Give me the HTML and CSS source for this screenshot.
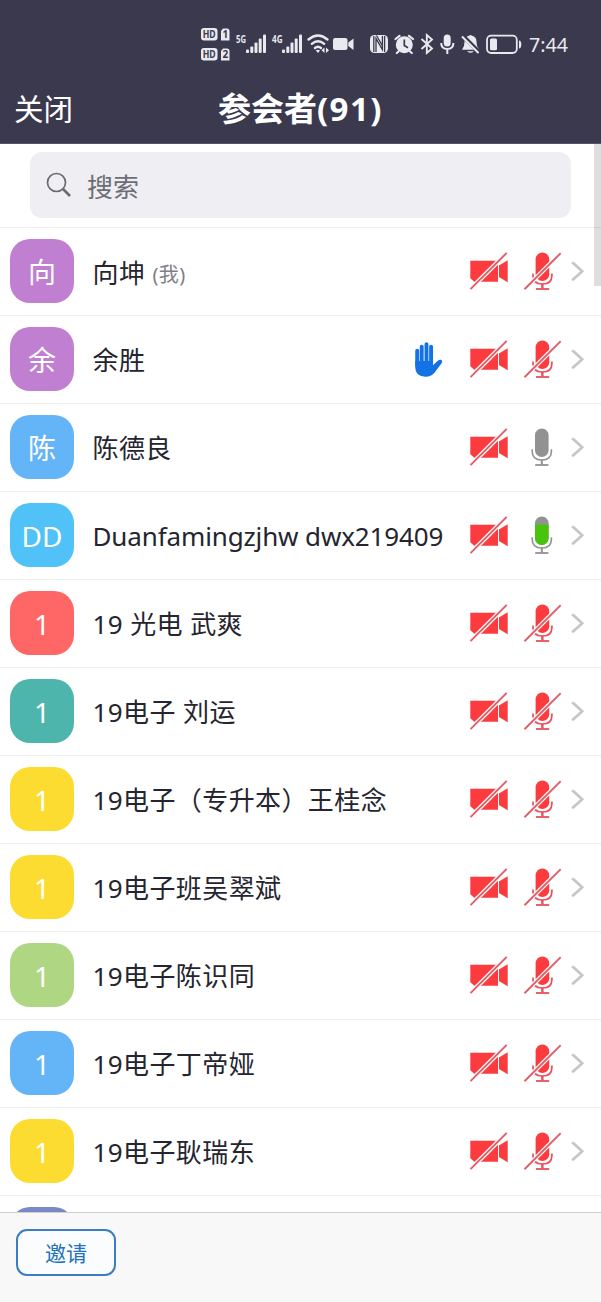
FILE: index.html
```html
<!DOCTYPE html>
<html lang="zh-CN">
<head>
<meta charset="utf-8">
<title>参会者</title>
<link rel="stylesheet" href="styles.css">
</head>
<body>
<svg class="sprite" width="0" height="0">
  <symbol id="cam" viewBox="0 0 40 41">
    <path fill="#fb3b3e" d="M1.3 9.7H29V30.7H5.3L1.3 27.2ZM30 14.6L38.7 9.2V31.2L30 26Z"/>
    <path stroke="#fff" stroke-width="4.4" d="M2 37.6L37.4 2.2"/>
    <path stroke="#e0606b" stroke-width="2" d="M1.5 38.1L37.7 1.9"/>
  </symbol>
  <symbol id="micoff" viewBox="0 0 40 41">
    <rect x="12.6" y="1.6" width="13.6" height="28.4" rx="6.8" fill="#fb3b3e"/>
    <path fill="none" stroke="#e4525a" stroke-width="1.7" d="M10 22.5V24.5Q10 33 19.4 33Q28.9 33 28.9 24.5V22.5"/>
    <path stroke="#e4525a" stroke-width="2.4" d="M19.4 33V37.5"/>
    <path stroke="#e4525a" stroke-width="1.8" d="M13 38H26.2"/>
    <path stroke="#fff" stroke-width="4.2" d="M3.5 36.3L36.5 3.3"/>
    <path stroke="#e0606b" stroke-width="2" d="M1.5 38.3L37.7 2.1"/>
  </symbol>
  <symbol id="mic" viewBox="0 0 40 41">
    <rect x="12" y="1.5" width="13.6" height="28.6" rx="6.8" fill="#929292"/>
    <path fill="none" stroke="#929292" stroke-width="1.6" d="M9.2 22.2V24.2Q9.2 33 18.8 33Q28.4 33 28.4 24.2V22.2"/>
    <path stroke="#929292" stroke-width="2" d="M18.8 33V38"/>
    <path stroke="#929292" stroke-width="1.8" d="M12.2 38H25.4"/>
  </symbol>
  <symbol id="miclive" viewBox="0 0 40 41">
    <use href="#mic"/>
    <path fill="#48c40c" d="M12 9.5H25.6V23.3A6.8 6.8 0 0 1 12 23.3Z"/>
  </symbol>
  <symbol id="go" viewBox="0 0 14 22">
    <path fill="none" stroke="#c6c6c6" stroke-width="2.8" d="M2.2 2.3L12.2 11.3L2.2 20.3"/>
  </symbol>
  <symbol id="hand" viewBox="0 0 30 37">
    <g fill="none" stroke="#1272e6" stroke-width="3.9" stroke-linecap="round">
      <path d="M4.2 9.8V24M8.7 5.6V22M13.5 3.1V22M18.1 5.6V22"/>
    </g>
    <path fill="#1272e6" d="M2.2 20H20V24.3L24.8 19.8Q26.2 18.4 28 18.8Q30.2 20.2 28.4 22.4L22 31Q19 35.7 12.4 35.7Q2.2 35.7 2.2 26Z"/>
  </symbol>
</svg>

<div class="app">
  <header class="top">
    <svg class="status" viewBox="0 0 601 72" fill="#e9e9f0">
      <g class="hd">
        <rect x="201" y="28" width="16.5" height="12.5" rx="3"/><path d="M223 28.5H227Q229.500 28.500 229.500 31V40.500H221V31Z"/>
        <rect x="201" y="48" width="16.500" height="12.500" rx="3"/><path d="M223 48.500H227Q229.500 48.500 229.500 51V60.500H221V51Z"/>
        <text x="202.700" y="38" textLength="13" lengthAdjust="spacingAndGlyphs">HD</text><text x="222.400" y="38.400">1</text>
        <text x="202.700" y="58" textLength="13" lengthAdjust="spacingAndGlyphs">HD</text><text x="222.400" y="58.400">2</text>
      </g>
      <g class="net">
        <text x="236" y="43" textLength="10" lengthAdjust="spacingAndGlyphs">5G</text>
        <text x="272" y="43" textLength="10.500" lengthAdjust="spacingAndGlyphs">4G</text>
      </g>
      <g id="bars">
        <rect x="246" y="49.500" width="3" height="3.500" rx="1"/><rect x="250.300" y="46.500" width="3" height="6.500" rx="1"/><rect x="254.500" y="42.500" width="3" height="10.500" rx="1"/><rect x="258.700" y="38.500" width="3" height="14.500" rx="1"/><rect x="263" y="34.500" width="3" height="18.500" rx="1"/>
      </g>
      <use href="#bars" x="36"/>
      <g fill="none" stroke="#e9e9f0" stroke-width="2.400" stroke-linecap="round">
        <path d="M308.500 39.500Q318 31.500 327.500 39.500M311.800 43.800Q318 38.500 324.200 43.800M315 48Q318 45.600 321 48"/>
      </g>
      <path d="M315.800 50.500Q318 49 320 50.500L318 53ZM324.500 47.500V53L321.500 50.200ZM326 47.500V53L329 50.200Z"/>
      <rect x="333" y="38" width="14.500" height="12" rx="2"/><path d="M348.300 42.500L353.500 38.500V50L348.300 46Z"/>
      <rect x="370" y="35" width="18" height="18" rx="4.500"/>
      <path fill="none" stroke="#3a394d" stroke-width="1.300" d="M373.800 36V52M376 52V38.500L382.400 49.500V36M384.600 36V52M376.500 35.500L382.500 46"/>
      <circle cx="404.300" cy="44.800" r="8.500"/>
      <path fill="none" stroke="#e9e9f0" stroke-width="2.200" stroke-linecap="round" d="M395.500 39L399.500 35.800M413 39L409 35.800M398.500 51.500L396.800 53M410 51.500L411.800 53"/>
      <path fill="none" stroke="#3a394d" stroke-width="1.700" d="M404.300 39.500V45.500L408 47.800"/>
      <path fill="none" stroke="#e9e9f0" stroke-width="1.900" d="M421.500 39L432 48.500L426.800 53V35L432 39.500L421.500 49"/>
      <rect x="443.700" y="34.500" width="7" height="12" rx="3.500"/>
      <path fill="none" stroke="#e9e9f0" stroke-width="2" d="M441.200 43Q441.200 49 447.300 49Q453.400 49 453.400 43M447.300 49V54"/>
      <path d="M462 49.800Q464.500 47 464.500 42Q464.500 36.500 469 35.800Q470.500 34 472 35.800Q476.500 36.500 476.500 42Q476.500 47 479 49.800ZM467 51.200H474Q470.500 54.500 467 51.200Z"/>
      <path stroke="#3a394d" stroke-width="4" d="M463.500 36.500L479 52"/>
      <path stroke="#e9e9f0" stroke-width="1.900" d="M462 36.500L478.500 53"/>
      <rect x="487" y="35.700" width="29.800" height="17.300" rx="4.200" fill="none" stroke="#e9e9f0" stroke-width="1.800"/>
      <rect x="490" y="38.500" width="7" height="11.800" rx="1.500"/><path d="M519 40.500Q521.300 40.500 521.300 44.300Q521.300 48.500 519 48.500Z"/>
      <text class="time" x="529" y="52" textLength="39" lengthAdjust="spacingAndGlyphs">7:44</text>
    </svg>
    <nav class="bar"><span class="close">关闭</span><h1 class="title">参会者<span class="count">(91)</span></h1></nav>
  </header>

  <main class="list">
    <div class="searchwrap">
      <div class="search">
        <svg width="26" height="26" viewBox="0 0 26 26" fill="none" stroke="#6a6a72"><circle cx="10.500" cy="10.500" r="9" stroke-width="1.700"/><path d="M17 17L24 24" stroke-width="2.600"/></svg>
        <span>搜索</span>
      </div>
    </div>
    <div class="row"><div class="av purple">向</div><div class="name me">向坤 <small>(我)</small></div><svg class="ic"><use href="#cam"/></svg><svg class="ic"><use href="#micoff"/></svg><svg class="go"><use href="#go"/></svg></div>
    <div class="row"><div class="av purple">余</div><div class="name">余胜</div><svg class="hand"><use href="#hand"/></svg><svg class="ic"><use href="#cam"/></svg><svg class="ic"><use href="#micoff"/></svg><svg class="go"><use href="#go"/></svg></div>
    <div class="row"><div class="av blue">陈</div><div class="name">陈德良</div><svg class="ic"><use href="#cam"/></svg><svg class="ic"><use href="#mic"/></svg><svg class="go"><use href="#go"/></svg></div>
    <div class="row"><div class="av sky">DD</div><div class="name latin">Duanfamingzjhw dwx219409</div><svg class="ic"><use href="#cam"/></svg><svg class="ic"><use href="#miclive"/></svg><svg class="go"><use href="#go"/></svg></div>
    <div class="row"><div class="av red">1</div><div class="name">19 光电 武爽</div><svg class="ic"><use href="#cam"/></svg><svg class="ic"><use href="#micoff"/></svg><svg class="go"><use href="#go"/></svg></div>
    <div class="row"><div class="av teal">1</div><div class="name">19电子 刘运</div><svg class="ic"><use href="#cam"/></svg><svg class="ic"><use href="#micoff"/></svg><svg class="go"><use href="#go"/></svg></div>
    <div class="row"><div class="av yellow">1</div><div class="name">19电子（专升本）王桂念</div><svg class="ic"><use href="#cam"/></svg><svg class="ic"><use href="#micoff"/></svg><svg class="go"><use href="#go"/></svg></div>
    <div class="row"><div class="av yellow">1</div><div class="name">19电子班吴翠斌</div><svg class="ic"><use href="#cam"/></svg><svg class="ic"><use href="#micoff"/></svg><svg class="go"><use href="#go"/></svg></div>
    <div class="row"><div class="av green">1</div><div class="name">19电子陈识同</div><svg class="ic"><use href="#cam"/></svg><svg class="ic"><use href="#micoff"/></svg><svg class="go"><use href="#go"/></svg></div>
    <div class="row"><div class="av blue">1</div><div class="name">19电子丁帝娅</div><svg class="ic"><use href="#cam"/></svg><svg class="ic"><use href="#micoff"/></svg><svg class="go"><use href="#go"/></svg></div>
    <div class="row"><div class="av yellow">1</div><div class="name">19电子耿瑞东</div><svg class="ic"><use href="#cam"/></svg><svg class="ic"><use href="#micoff"/></svg><svg class="go"><use href="#go"/></svg></div>
    <div class="row"><div class="av indigo"></div></div>
    <div class="thumb"></div>
  </main>

  <footer class="foot"><button class="invite">邀请</button></footer>
</div>
</body>
</html>
```
FILE: styles.css
```css
* { box-sizing: border-box; }
body {
  margin: 0;
  background: #fff;
  color: #25252f;
  font-family: "Noto Sans", "Noto Sans CJK SC", sans-serif;
}
.sprite { position: absolute; }
.app {
  width: 601px;
  height: 1302px;
  display: flex;
  flex-direction: column;
  overflow: hidden;
}
.top {
  flex: none;
  height: 144px;
  background: #3a394d;
  border-bottom: 1px solid #55546a;
  color: #fff;
}
.status { display: block; width: 601px; height: 72px; }
.hd text { fill: #3a394d; font-size: 10px; font-weight: 700; }
.net text { font-size: 11px; font-weight: 700; }
.time { font-size: 20px; }
.bar {
  height: 71px;
  display: grid;
  grid-template-columns: 100px 1fr 100px;
  align-items: center;
  padding-top: 2px;
}
.close { padding-left: 14px; font-size: 29.5px; line-height: 40px; }
.title {
  margin: 0;
  text-align: center;
  font-size: 33px;
  font-weight: 700;
  line-height: 44px;
}
.count { letter-spacing: 1.5px; }
.list {
  position: relative;
  flex: none;
  height: 1068px;
  overflow: hidden;
}
.searchwrap {
  height: 84px;
  padding: 8px 30px 0;
  border-bottom: 1px solid #ededed;
}
.search {
  height: 66px;
  border-radius: 12px;
  background: #efeef3;
  display: flex;
  align-items: center;
  gap: 15px;
  padding-left: 16px;
  color: #6d6d75;
  font-size: 26px;
  line-height: 36px;
}
.search svg { margin-bottom: 1px; }
.search span { padding-top: 3px; }
.row {
  height: 88px;
  display: flex;
  align-items: center;
  padding: 0 17px 1px 10px;
  border-bottom: 1px solid #ededed;
}
.av {
  flex: none;
  width: 64px;
  height: 64px;
  border-radius: 20px;
  display: flex;
  align-items: center;
  justify-content: center;
  padding-top: 2px;
  color: #fff;
  font-size: 28px;
  line-height: 40px;
}
.purple { background: #c07fd0; }
.blue { background: #64b4f8; }
.sky { background: #50c2f8; }
.red { background: #ff6766; }
.teal { background: #4eb5ac; }
.yellow { background: #fddc32; }
.green { background: #afd683; }
.indigo { background: #7b88c6; }
.name {
  flex: 1;
  min-width: 0;
  margin-left: 18.5px;
  padding-top: 2px;
  font-size: 26px;
  line-height: 38px;
  letter-spacing: 0.4px;
  white-space: nowrap;
}
.me { padding-top: 4px; }
.name small { font-size: 20px; line-height: 1; vertical-align: 1px; color: #808087; }
.latin { letter-spacing: -0.13px; }
.ic { flex: none; width: 40px; height: 41px; margin-right: 14px; }
.go { flex: none; width: 14px; height: 22px; margin-left: -7px; }
.hand { flex: none; width: 30px; height: 37px; margin-right: 26px; }
.thumb {
  position: absolute;
  top: 0;
  right: 0;
  width: 7px;
  height: 142px;
  background: rgba(0, 0, 0, 0.13);
}
.foot {
  flex: 1;
  background: #f8f8f8;
  border-top: 1px solid #cfcfcf;
  padding: 16px;
}
.invite {
  display: flex;
  align-items: center;
  justify-content: center;
  width: 100px;
  height: 47px;
  padding: 0;
  border: 2px solid #3a7dc2;
  border-radius: 11px;
  background: #fbfcfd;
  color: #2272be;
  font: 21px/30px "Noto Sans", "Noto Sans CJK SC", sans-serif;
}
```
